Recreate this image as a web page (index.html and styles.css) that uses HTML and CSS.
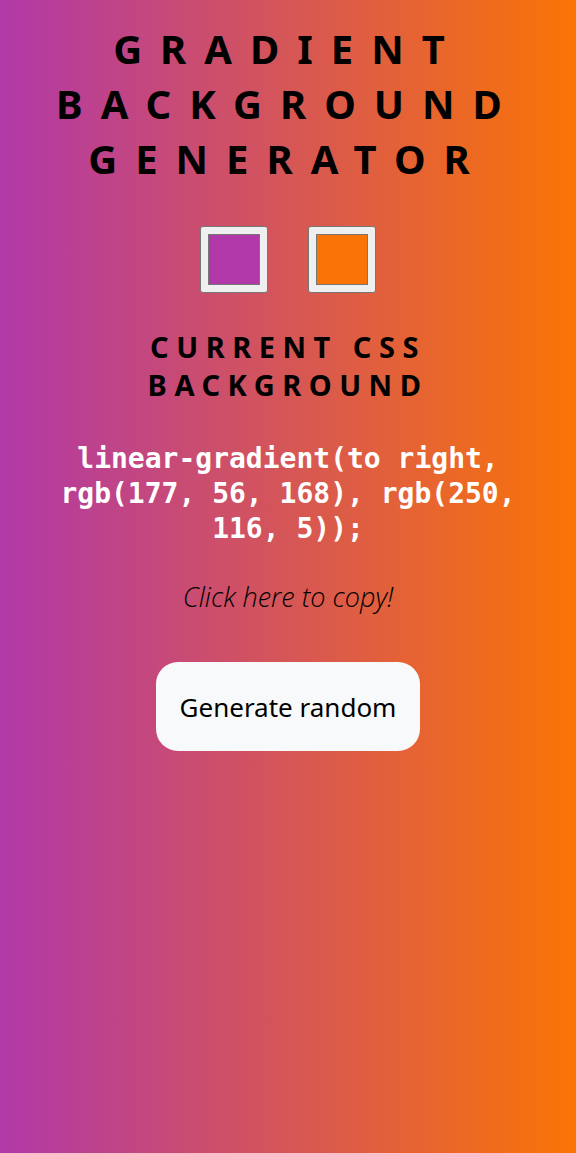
FILE: index.html
```html
<!DOCTYPE html>
<html lang="en">
<head>
<meta charset="utf-8">
<title>Gradient Background Generator</title>
<link rel="stylesheet" href="styles.css">
</head>
<body>
<main class="page">
  <h1 class="title">Gradient Background Generator</h1>
  <div class="pickers">
    <div class="picker"><span class="swatch swatch-a"></span></div>
    <div class="picker"><span class="swatch swatch-b"></span></div>
  </div>
  <h2 class="subtitle">Current CSS Background</h2>
  <p class="code">linear-gradient(to right, rgb(177, 56, 168), rgb(250, 116, 5));</p>
  <p class="copy">Click here to copy!</p>
  <button class="btn">Generate random</button>
</main>
</body>
</html>
```
FILE: styles.css
```css
html, body {
  margin: 0;
  padding: 0;
}
body {
  min-height: 100vh;
  background: linear-gradient(to right, rgb(177, 56, 168), rgb(250, 116, 5));
  font-family: "Noto Sans", "Open Sans", sans-serif;
  color: #000;
}
.page {
  display: flex;
  flex-direction: column;
  align-items: center;
  padding: 21px 30px 0;
  text-align: center;
}
.title {
  margin: 0;
  font-size: 40px;
  line-height: 55px;
  font-weight: 700;
  letter-spacing: 18px;
  text-transform: uppercase;
  max-width: 500px;
}
.pickers {
  display: flex;
  gap: 40px;
  margin-top: 40px;
}
.picker {
  width: 68px;
  height: 67px;
  box-sizing: border-box;
  border: 1px solid #767676;
  border-radius: 3px;
  background: #efefef;
  padding: 7px;
  display: flex;
}
.swatch {
  flex: 1;
  border: 1px solid #777;
}
.swatch-a { background: rgb(177, 56, 168); }
.swatch-b { background: rgb(250, 116, 5); }
.subtitle {
  margin: 35px 0 0;
  font-size: 29px;
  line-height: 38px;
  font-weight: 700;
  letter-spacing: 7.5px;
  text-transform: uppercase;
  max-width: 320px;
}
.code {
  margin: 37px 0 0;
  font-family: "DejaVu Sans Mono", monospace;
  font-weight: 700;
  font-size: 28px;
  line-height: 35px;
  color: #fff;
  max-width: 480px;
}
.copy {
  margin: 34px 0 0;
  font-family: "Open Sans", sans-serif;
  font-style: italic;
  font-weight: 300;
  font-size: 27px;
  line-height: 34px;
}
.btn {
  margin-top: 48px;
  width: 264px;
  height: 89px;
  border: none;
  border-radius: 22px;
  background: #f8f9fa;
  font-family: "Noto Sans", sans-serif;
  font-size: 26px;
  color: #000;
}
```
